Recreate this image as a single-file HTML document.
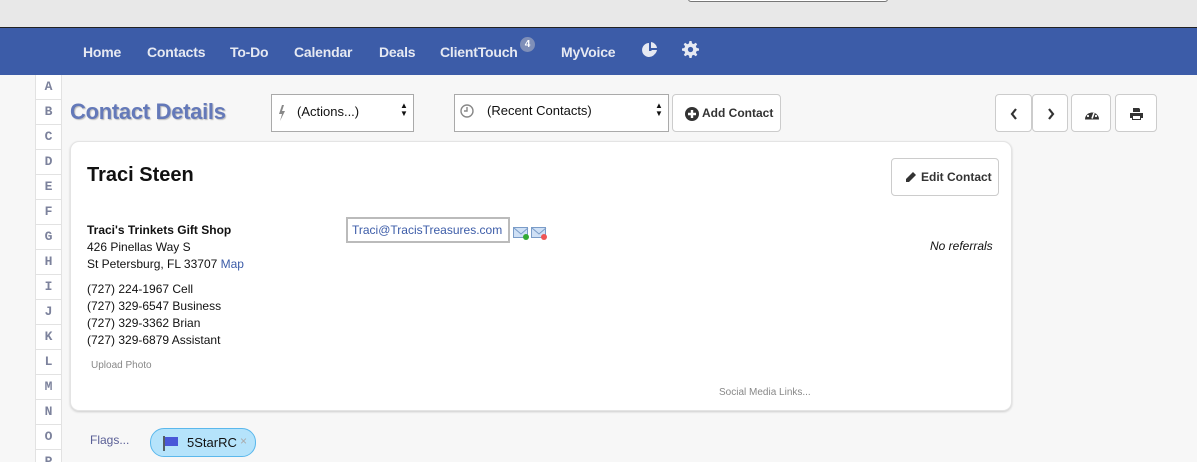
<!DOCTYPE html>
<html><head><meta charset="utf-8"><style>
*{margin:0;padding:0;box-sizing:border-box}
html,body{width:1197px;height:462px;overflow:hidden}
body{background:#f7f7f7;font-family:"Liberation Sans",sans-serif;position:relative;color:#111}
.topbar{position:absolute;left:0;top:0;width:1197px;height:28px;background:#e8e8e8;border-bottom:1px solid #222}
.topbar .inp{position:absolute;left:688px;top:-2px;width:200px;height:4px;border:1px solid #777;border-top:none;border-radius:0 0 3px 3px;background:#fff}
.nav{position:absolute;left:0;top:28px;width:1197px;height:47px;background:#3c5ca8}
.nav span{position:absolute;top:16px;color:#e6e9f2;font-weight:bold;font-size:14px;letter-spacing:-0.2px}
.badge{position:absolute;left:520px;top:37px;width:15px;height:15px;border-radius:8px;background:#7f8fb8;color:#fff;font-size:10px;text-align:center;line-height:15px;font-weight:bold}
.alpha{position:absolute;left:35px;top:75px;width:27px}
.alpha div{height:25px;border:1px solid #e2e2e2;border-top:none;background:#fff;text-align:center;font:bold 13px "Liberation Mono",monospace;color:#7c829c;line-height:24px}
.title{position:absolute;left:70px;top:99px;font-size:22px;font-weight:bold;color:#6479b9;text-shadow:1px 1px 1px #bbb;letter-spacing:-0.3px}
.sel{position:absolute;background:#fff;border:1px solid #aaa;font-size:13px}
.btn{position:absolute;background:#fff;border:1px solid #ccc;border-radius:4px;font-weight:bold;font-size:12px;color:#333}
.card{position:absolute;left:70px;top:141px;width:942px;height:270px;background:#fff;border-radius:9px;border:1px solid #e4e4e4;box-shadow:0 1px 2px #ccc}
.t{position:absolute;font-size:13px;white-space:nowrap}
</style></head><body>
<div class="topbar"><div class="inp"></div></div>
<div class="nav">
<span style="left:83px">Home</span><span style="left:147px">Contacts</span><span style="left:230px">To-Do</span><span style="left:294px">Calendar</span><span style="left:379px">Deals</span><span style="left:440px">ClientTouch</span><span style="left:561px">MyVoice</span>
<svg style="position:absolute;left:641px;top:13px" width="18" height="18" viewBox="0 0 18 18"><path d="M8 2A7 7 0 1 0 15 10H8Z" fill="#e6e9f2"/><path d="M10 1A7 7 0 0 1 16 7H10Z" fill="#e6e9f2"/><path d="M10 9H16A7 7 0 0 1 14 13Z" fill="#e6e9f2"/></svg>
<svg style="position:absolute;left:682px;top:13px" width="17" height="17" viewBox="0 0 16 16"><path d="M7 0h2l.4 2.2 1.6.7 1.9-1.3 1.4 1.4-1.3 1.9.7 1.6L16 7v2l-2.2.4-.7 1.6 1.3 1.9-1.4 1.4-1.9-1.3-1.6.7L9 16H7l-.4-2.2-1.6-.7-1.9 1.3-1.4-1.4 1.3-1.9-.7-1.6L0 9V7l2.2-.4.7-1.6-1.3-1.9 1.4-1.4 1.9 1.3 1.6-.7Z" fill="#e6e9f2"/><circle cx="8" cy="8" r="2.5" fill="#3c5ca8"/></svg>
</div>
<div class="badge">4</div>
<div class="alpha"><div>A</div><div>B</div><div>C</div><div>D</div><div>E</div><div>F</div><div>G</div><div>H</div><div>I</div><div>J</div><div>K</div><div>L</div><div>M</div><div>N</div><div>O</div><div>P</div></div>
<div class="title">Contact Details</div>
<div class="sel" style="left:271px;top:94px;width:143px;height:38px"><svg style="position:absolute;left:6px;top:10px" width="8" height="16" viewBox="0 0 8 16"><path d="M4 0L1 9h3L2 16 7 6H4L6 0Z" fill="#888"/></svg><span style="position:absolute;left:25px;top:9px">(Actions...)</span><span style="position:absolute;left:128px;top:7px;font-size:8px;line-height:8px">▲<br>▼</span></div>
<div class="sel" style="left:454px;top:94px;width:215px;height:38px"><svg style="position:absolute;left:5px;top:9px" width="14" height="14" viewBox="0 0 14 14"><circle cx="7" cy="7" r="6" fill="none" stroke="#888" stroke-width="1.4"/><path d="M7 3v4H4" fill="none" stroke="#888" stroke-width="1.4"/></svg><span style="position:absolute;left:32px;top:8px">(Recent Contacts)</span><span style="position:absolute;left:200px;top:7px;font-size:8px;line-height:8px">▲<br>▼</span></div>
<div class="btn" style="left:672px;top:94px;width:109px;height:38px"><svg style="position:absolute;left:12px;top:12px" width="14" height="14" viewBox="0 0 14 14"><circle cx="7" cy="7" r="7" fill="#333"/><path d="M7 3v8M3 7h8" stroke="#fff" stroke-width="2.4"/></svg><span style="position:absolute;left:29px;top:11px">Add Contact</span></div>
<div class="btn" style="left:995px;top:94px;width:37px;height:38px"><svg style="position:absolute;left:14px;top:13px" width="8" height="12" viewBox="0 0 8 12"><path d="M6 1L2 6l4 5" fill="none" stroke="#333" stroke-width="2.2"/></svg></div>
<div class="btn" style="left:1032px;top:94px;width:36px;height:38px"><svg style="position:absolute;left:14px;top:13px" width="8" height="12" viewBox="0 0 8 12"><path d="M2 1l4 5-4 5" fill="none" stroke="#333" stroke-width="2.2"/></svg></div>
<div class="btn" style="left:1071px;top:94px;width:40px;height:38px"><svg style="position:absolute;left:12px;top:12px" width="16" height="14" viewBox="0 0 16 14"><path d="M1 12.5A7 7 0 1 1 15 12.5Z" fill="#333"/><path d="M8 11.5L10 6" stroke="#fff" stroke-width="1.6"/><circle cx="4" cy="9" r="1.1" fill="#fff"/><circle cx="5.5" cy="5" r="1.1" fill="#fff"/><circle cx="12" cy="9" r="1.1" fill="#fff"/></svg></div>
<div class="btn" style="left:1115px;top:94px;width:42px;height:38px"><svg style="position:absolute;left:13px;top:12px" width="15" height="14" viewBox="0 0 15 14"><path d="M4 1h6l1 1v3H4Z M1 6h13v5h-2v2H3v-2H1Z" fill="#333"/><rect x="4" y="9" width="7" height="3" fill="#fff"/></svg></div>
<div class="card">
<div class="t" style="left:16px;top:22px;font-size:20px;font-weight:bold">Traci Steen</div>
<div class="btn" style="left:820px;top:16px;width:108px;height:38px"><svg style="position:absolute;left:12px;top:12px" width="13" height="13" viewBox="0 0 13 13"><path d="M9 1l3 3-7 7H2V8Z" fill="#333"/></svg><span style="position:absolute;left:29px;top:11px">Edit Contact</span></div>
<div class="t" style="left:16px;top:81px;font-weight:bold;font-size:12px">Traci's Trinkets Gift Shop</div>
<div class="t" style="left:16px;top:98px;font-size:12px">426 Pinellas Way S</div>
<div class="t" style="left:16px;top:115px;font-size:12px">St Petersburg, FL 33707 <span style="color:#3c5ca8">Map</span></div>
<div class="t" style="left:16px;top:139px;font-size:12px;line-height:17px">(727) 224-1967 Cell<br>(727) 329-6547 Business<br>(727) 329-3362 Brian<br>(727) 329-6879 Assistant</div>
<div class="t" style="left:20px;top:218px;font-size:10px;color:#888">Upload Photo</div>
<div class="t" style="left:275px;top:75px;width:164px;height:26px;border:2px solid #bbb;color:#3c5ca8;font-size:12px;padding:4px 4px">Traci@TracisTreasures.com</div>
<svg class="t" style="left:442px;top:84px" width="36" height="14" viewBox="0 0 36 14"><rect x="0.5" y="1.5" width="14" height="10" fill="#cfe0f5" stroke="#7a9cc8"/><path d="M1 2l7 6 7-6" fill="none" stroke="#7a9cc8"/><circle cx="13" cy="11" r="3" fill="#3a3"/><rect x="18.5" y="1.5" width="14" height="10" fill="#cfe0f5" stroke="#7a9cc8"/><path d="M19 2l7 6 7-6" fill="none" stroke="#7a9cc8"/><circle cx="31" cy="11" r="3" fill="#e55"/></svg>
<div class="t" style="left:859px;top:97px;font-size:12px;font-style:italic">No referrals</div>
<div class="t" style="left:648px;top:245px;font-size:10px;color:#888">Social Media Links...</div>
</div>
<div class="t" style="left:90px;top:433px;color:#5a5f96;font-size:12px">Flags...</div>
<div style="position:absolute;left:150px;top:428px;width:106px;height:29px;border-radius:14px;background:#b5e3fb;border:1px solid #5bb8ec">
<svg style="position:absolute;left:11px;top:6px" width="18" height="16" viewBox="0 0 18 16"><path d="M2 1v15" stroke="#333" stroke-width="1.5"/><path d="M3 2h13v9H3Z" fill="#4957d8"/></svg>
<span style="position:absolute;left:36px;top:6px;font-size:13px">5StarRC</span><span style="position:absolute;left:89px;top:5px;font-size:12px;color:#aaa">×</span></div>
</body></html>
